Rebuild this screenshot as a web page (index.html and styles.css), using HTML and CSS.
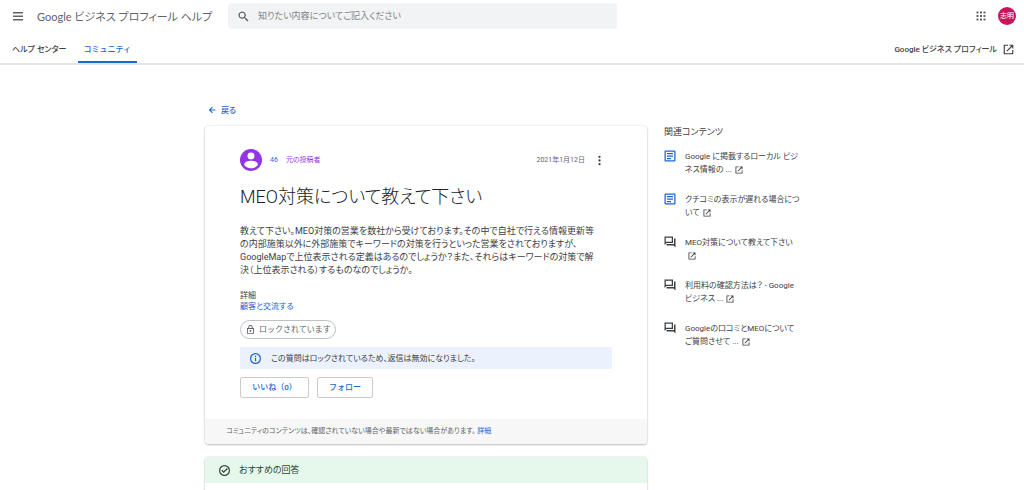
FILE: index.html
```
<!DOCTYPE html>
<html lang="ja">
<head>
<meta charset="utf-8">
<meta name="viewport" content="width=device-width, initial-scale=1">
<title>MEO対策について教えて下さい - Google ビジネス プロフィール ヘルプ</title>
<link rel="stylesheet" href="styles.css">
</head>
<body>
<!-- 共通アイコン -->
<svg class="sprite" aria-hidden="true">
	<symbol id="open" viewBox="0 0 24 24"><path d="M20 20H4V4h7V1.500H1.500v21h21V13H20zM14 1.500V4h4.200L7.500 14.700l1.800 1.800L20 5.800V10h2.500V1.500z"/></symbol>
	<symbol id="article" viewBox="0 0 24 24"><path fill-rule="evenodd" d="M3 1h18a2 2 0 0 1 2 2v18a2 2 0 0 1-2 2H3a2 2 0 0 1-2-2V3a2 2 0 0 1 2-2zm.5 2.500v17h17v-17zM6 6h12v2.500H6zm0 5h12v2.500H6zm0 5h8v2.500H6z"/></symbol>
	<symbol id="forum" viewBox="0 0 24 24"><path fill-rule="evenodd" d="M1 1h17v13H5l-4 4zm2.500 2.500v8h12v-8zM20 5h3v18l-4-4H5v-3h15z"/></symbol>
</svg>
<header class="header">
	<div class="top">
		<button class="icon-btn menu" aria-label="メニュー">
			<svg viewBox="0 0 24 24"><path d="M2 4h20v3H2zm0 7h20v3H2zm0 7h20v3H2z"/></svg>
		</button>
		<a class="logo" href="#">Google ビジネス プロフィール ヘルプ</a>
		<form class="search">
			<svg viewBox="0 0 24 24"><path fill-rule="evenodd" d="M9 1a8 8 0 0 1 6.400 12.800l.6.7h.8l6.200 6.200-2.300 2.300-6.200-6.200V16l-.7-.6A8 8 0 1 1 9 1zm0 2.700a5.300 5.300 0 1 0 0 10.600A5.300 5.300 0 0 0 9 3.700z"/></svg>
			<input type="text" aria-label="検索" placeholder="知りたい内容についてご記入ください">
		</form>
		<div class="account">
			<button class="icon-btn apps" aria-label="アプリ">
				<svg viewBox="0 0 24 24"><path d="M3 3h4v4H3zm7 0h4v4h-4zm7 0h4v4h-4zM3 10h4v4H3zm7 0h4v4h-4zm7 0h4v4h-4zM3 17h4v4H3zm7 0h4v4h-4zm7 0h4v4h-4z"/></svg>
			</button>
			<button class="user">志明</button>
		</div>
	</div>
	<nav class="tabs">
		<a class="tab" href="#">ヘルプ センター</a>
		<a class="tab active" href="#">コミュニティ</a>
		<a class="product" href="#">Google ビジネス プロフィール <svg><use href="#open"/></svg></a>
	</nav>
</header>
<div class="page">
	<main class="content">
		<a class="back" href="#">
			<svg viewBox="0 0 24 24"><path d="M22 10.500v3H8.500l5.700 5.700-2.200 2.200L2.600 12 12 2.600l2.200 2.200-5.700 5.700z"/></svg>
			戻る
		</a>
		<article class="card">
			<div class="question">
				<div class="author">
					<svg class="avatar" viewBox="0 0 24 24"><circle cx="12" cy="12" r="12"/><circle class="face" cx="12" cy="7.500" r="3.800"/><path class="face" d="M4.500 17.200c0-3 4-4.400 7.500-4.400s7.500 1.400 7.500 4.400c-1.400 2.200-4.200 3.800-7.500 3.800s-6.100-1.600-7.500-3.800z"/></svg>
					<a class="name" href="#">46</a>
					<span class="poster">元の投稿者</span>
					<time class="date" datetime="2021-01-12">2021年1月12日</time>
					<button class="icon-btn more" aria-label="その他">
						<svg viewBox="0 0 24 24"><circle cx="12" cy="4" r="2.500"/><circle cx="12" cy="12" r="2.500"/><circle cx="12" cy="20" r="2.500"/></svg>
					</button>
				</div>
				<h1>MEO対策について教えて下さい</h1>
				<p class="text">教えて下さい。MEO対策の営業を数社から受けております。その中で自社で行える情報更新等<br>の内部施策以外に外部施策でキーワードの対策を行うといった営業をされておりますが、<br>GoogleMapで上位表示される定義はあるのでしょうか？また、それらはキーワードの対策で解<br>決（上位表示される）するものなのでしょうか。</p>
				<div class="detail">
					<div>詳細</div>
					<a href="#">顧客と交流する</a>
				</div>
				<div class="chip">
					<svg viewBox="0 0 24 24"><path fill-rule="evenodd" d="M6 8V6a6 6 0 0 1 12 0v2h3.500v15.500h-19V8zm2.500 0h7V6a3.500 3.500 0 0 0-7 0zM5 10.500V21h14V10.500z"/><circle cx="12" cy="15.700" r="2.400"/></svg>
					ロックされています
				</div>
				<div class="notice">
					<svg viewBox="0 0 24 24"><path fill-rule="evenodd" d="M12 0a12 12 0 1 1 0 24 12 12 0 0 1 0-24zm0 2.600a9.400 9.400 0 1 0 0 18.800 9.400 9.400 0 0 0 0-18.800zM10.700 10.500h2.600V18h-2.600zm0-4.500h2.600v2.600h-2.600z"/></svg>
					この質問はロックされているため、返信は無効になりました。
				</div>
				<div class="actions">
					<button class="like">いいね（0）</button>
					<button class="follow">フォロー</button>
				</div>
			</div>
			<footer class="note">コミュニティのコンテンツは、確認されていない場合や最新ではない場合があります。 <a href="#">詳細</a></footer>
		</article>
		<section class="card answer">
			<h2>
				<svg viewBox="0 0 24 24"><path fill-rule="evenodd" d="M12 0a12 12 0 1 1 0 24 12 12 0 0 1 0-24zm0 2.600a9.400 9.400 0 1 0 0 18.800 9.400 9.400 0 0 0 0-18.800zM17.300 6.600l1.900 1.900-9 9-5-5 1.900-1.900 3.100 3.100z"/></svg>
				おすすめの回答
			</h2>
			<div class="answer-body"></div>
		</section>
	</main>
	<aside class="related">
		<h3>関連コンテンツ</h3>
		<ul>
			<li>
				<svg class="type doc"><use href="#article"/></svg>
				<a href="#">Google に掲載するローカル ビジ<br>ネス情報の ... <svg><use href="#open"/></svg></a>
			</li>
			<li>
				<svg class="type doc"><use href="#article"/></svg>
				<a href="#">クチコミの表示が遅れる場合につ<br>いて <svg><use href="#open"/></svg></a>
			</li>
			<li>
				<svg class="type"><use href="#forum"/></svg>
				<a href="#">MEO対策について教えて下さい<br>&nbsp;<svg><use href="#open"/></svg></a>
			</li>
			<li>
				<svg class="type"><use href="#forum"/></svg>
				<a href="#">利用料の確認方法は？ - Google<br>ビジネス ... <svg><use href="#open"/></svg></a>
			</li>
			<li>
				<svg class="type"><use href="#forum"/></svg>
				<a href="#">Googleの口コミとMEOについて<br>ご質問させて ... <svg><use href="#open"/></svg></a>
			</li>
		</ul>
	</aside>
</div>
</body>
</html>
```

FILE: styles.css
```
*{
	box-sizing: border-box;
}
body{
	margin: 0;
	background-color: #fff;
	color: #3c4043;
	font-family: Roboto, "Noto Sans CJK JP", sans-serif;
	font-size: 8px;
	line-height: 13px;
	font-feature-settings: "palt";
}
a{
	color: #1967d2;
	text-decoration: none;
}
button{
	padding: 0;
	border: 0;
	background: none;
	color: inherit;
	font: inherit;
	cursor: pointer;
}
svg{
	flex: none;
	fill: currentColor;
}
h1, h2, h3, p, ul{
	margin: 0;
	padding: 0;
	font-weight: normal;
}
.sprite{
	display: none;
}
.icon-btn{
	display: flex;
	color: #5f6368;
}
.icon-btn svg{
	width: 12px;
	height: 12px;
}

/* ヘッダー */
.header{
	border-bottom: 2px solid #e4e5e6;
}
.top{
	display: grid;
	grid-template-columns: 12px 178px minmax(100px, 389px) 1fr;
	align-items: center;
	column-gap: 13px;
	height: 32px;
	padding: 0 8px 0 12px;
}
.logo{
	color: #5f6368;
	font-family: Lato, "Noto Sans CJK JP", sans-serif;
	font-size: 11px;
	white-space: nowrap;
}
.search{
	display: flex;
	align-items: center;
	height: 26px;
	padding: 0 10px;
	border-radius: 4px;
	background-color: #f1f3f4;
	color: #5f6368;
}
.search svg{
	width: 11px;
	height: 11px;
}
.search input{
	flex: 1;
	min-width: 0;
	margin-left: 9px;
	padding: 0;
	border: 0;
	outline: 0;
	background: none;
	font: inherit;
	font-size: 9px;
	font-feature-settings: inherit;
}
.search input::placeholder{
	color: #80868b;
}
.account{
	display: flex;
	justify-content: flex-end;
	align-items: center;
	gap: 11px;
}
.user{
	width: 18px;
	height: 18px;
	border-radius: 50%;
	background-color: #c2185b;
	color: #fff;
	font-size: 7px;
	line-height: 18px;
}
.tabs{
	display: flex;
	height: 31px;
	padding: 0 10px 0 6px;
	font-weight: 500;
	line-height: 35px;
}
.tab{
	padding: 0 6px;
	color: #3c4043;
}
.tab.active{
	margin-left: 5px;
	border-bottom: 2px solid #1967d2;
	color: #1967d2;
	font-feature-settings: normal;
}
.product{
	display: flex;
	align-items: center;
	gap: 6px;
	height: 35px;
	margin-left: auto;
	color: #3c4043;
}
.product svg{
	width: 11px;
	height: 11px;
}

/* 本文 */
.page{
	display: grid;
	grid-template-columns: minmax(0, 1fr) 155px;
	column-gap: 17px;
	max-width: 614px;
	margin: 0 auto;
}
.content{
	padding: 38px 0 20px;
}
.back{
	display: flex;
	align-items: center;
	gap: 5px;
	height: 14px;
	margin: 0 3px 9px;
	font-weight: 500;
}
.back svg{
	width: 8px;
	height: 8px;
}
.card{
	margin: 0 0 13px;
	border-radius: 4px;
	background-color: #fff;
	box-shadow: 0 1px 2px rgba(60,64,67,.3), 0 0 2px rgba(60,64,67,.2);
	overflow: hidden;
}
.question{
	padding: 23px 35px 21px;
}
.author{
	display: flex;
	align-items: center;
	height: 22px;
	font-size: 7px;
}
.avatar{
	width: 22px;
	height: 22px;
	color: #9334e6;
}
.avatar .face{
	fill: #fff;
}
.name{
	margin: 0 8px;
}
.poster{
	color: #9334e6;
}
.date{
	margin-left: auto;
	color: #5f6368;
}
.more{
	margin: 0 7px 0 9px;
	color: #3c4043;
}
.more svg{
	width: 11px;
	height: 11px;
}
h1{
	margin: 12px 0 14px;
	color: #202124;
	font-size: 18px;
	font-weight: 300;
	line-height: 28px;
}
.text{
	margin-bottom: 13px;
	font-size: 9px;
}
.detail{
	line-height: 11px;
}
.chip{
	display: inline-flex;
	align-items: center;
	gap: 4px;
	height: 19px;
	margin: 8px 0;
	padding: 0 4px 0 5px;
	border: 1px solid #bdc1c6;
	border-radius: 10px;
	color: #5f6368;
	font-feature-settings: normal;
}
.chip svg{
	width: 9px;
	height: 9px;
}
.notice{
	display: flex;
	align-items: center;
	gap: 10px;
	height: 22px;
	padding: 0 10px;
	background-color: #ebf2fe;
}
.notice svg{
	width: 11px;
	height: 11px;
	color: #1967d2;
}
.actions{
	display: flex;
	gap: 8px;
	margin-top: 8px;
}
.actions button{
	height: 21px;
	padding: 0 11px;
	border: 1px solid #c8cbcf;
	border-radius: 2px;
	color: #1967d2;
	font-weight: 500;
	font-feature-settings: normal;
}
.actions .like{
	min-width: 69px;
}
.actions .follow{
	min-width: 56px;
}
.note{
	height: 25px;
	padding: 0 21px;
	background-color: #f7f7f7;
	color: #5f6368;
	font-size: 7px;
	line-height: 25px;
}
.answer h2{
	display: flex;
	align-items: center;
	gap: 9px;
	height: 26px;
	padding: 0 14px;
	background-color: #e6f7ec;
	color: #2c4a39;
	font-size: 9px;
}
.answer h2 svg{
	width: 11px;
	height: 11px;
}
.answer-body{
	height: 60px;
}

/* 関連コンテンツ */
.related{
	padding-top: 61px;
}
.related h3{
	font-size: 9px;
}
.related ul{
	margin-top: 11px;
	list-style: none;
}
.related li{
	display: flex;
	gap: 9px;
	margin-bottom: 17px;
}
.related a{
	color: #3c4043;
	white-space: nowrap;
}
.related a svg{
	width: 8px;
	height: 8px;
	margin-left: 1px;
	vertical-align: -2px;
}
.related .type{
	width: 12px;
	height: 12px;
}
.related .doc{
	color: #1967d2;
}
```
